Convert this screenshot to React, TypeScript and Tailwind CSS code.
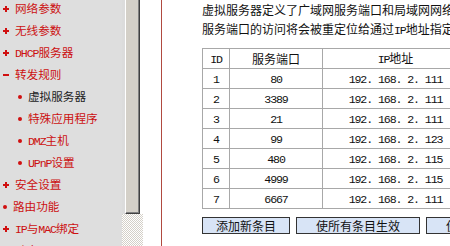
import type { ReactNode } from "react";

// half-width latin / digits in the bitmap-font look
function M({ children }: { children: ReactNode }) {
  return (
    <span className="font-['Liberation_Mono',monospace] text-[11.6px] tracking-[-1.1px]">
      {children}
    </span>
  );
}

type MenuItem = {
  label: ReactNode;
  sub?: boolean;
  mark?: "plus" | "minus" | "dot";
  active?: boolean;
};

const MENU: MenuItem[] = [
  { label: "网络参数", mark: "plus" },
  { label: "无线参数", mark: "plus" },
  { label: <><M>DHCP</M>服务器</>, mark: "plus" },
  { label: "转发规则", mark: "minus" },
  { label: "虚拟服务器", sub: true, active: true },
  { label: "特殊应用程序", sub: true },
  { label: <><M>DMZ</M>主机</>, sub: true },
  { label: <><M>UPnP</M>设置</>, sub: true },
  { label: "安全设置", mark: "plus" },
  { label: "路由功能", mark: "dot" },
  { label: <><M>IP</M>与<M>MAC</M>绑定</>, mark: "plus" },
  { label: <>动态<M>DNS</M></>, mark: "plus" },
];

const ROWS = [
  { id: "1", port: "80", ip: "192.168.2.111" },
  { id: "2", port: "3389", ip: "192.168.2.111" },
  { id: "3", port: "21", ip: "192.168.2.111" },
  { id: "4", port: "99", ip: "192.168.2.123" },
  { id: "5", port: "480", ip: "192.168.2.115" },
  { id: "6", port: "4999", ip: "192.168.2.115" },
  { id: "7", port: "6667", ip: "192.168.2.111" },
];

function Mark({ kind }: { kind?: MenuItem["mark"] }) {
  if (kind === "plus")
    return (
      <svg width="6" height="6" viewBox="0 0 6 6" className="shrink-0">
        <rect x="0" y="2" width="6" height="2" fill="#d01010" />
        <rect x="2" y="0" width="2" height="6" fill="#d01010" />
      </svg>
    );
  if (kind === "minus")
    return (
      <svg width="6" height="6" viewBox="0 0 6 6" className="shrink-0">
        <rect x="0" y="2" width="6" height="2" fill="#d01010" />
      </svg>
    );
  return <span className="size-[4px] shrink-0 rounded-full bg-[#d01010]" />;
}

const cell = "border border-[#a8a8a8] p-0 text-center font-normal";

export default function App() {
  return (
    <div className="flex h-[246px] w-[450px] overflow-hidden bg-white font-['Noto_Sans_CJK_SC',sans-serif] text-[11.6px]">
      {/* Menu frame */}
      <div className="w-[122px] shrink-0 bg-[#dedede]">
        <ul className="-mt-[2px]">
          {MENU.map((item, i) => (
            <li
              key={i}
              className={
                "flex h-[22px] items-center whitespace-nowrap " +
                (item.sub ? "gap-[6px] pl-[18px]" : "gap-[6px] pl-[3px]") +
                (item.active ? " text-[#222222]" : " text-[#cc1010]")
              }
            >
              <Mark kind={item.mark} />
              <span>{item.label}</span>
            </li>
          ))}
        </ul>
      </div>

      {/* Scrollbar */}
      <div className="flex w-[21px] shrink-0 flex-col">
        <div className="flex h-[214px]">
          <div className="w-[3px] bg-[#dcdcdc]" />
          <div className="w-[15px] border-r border-b border-l border-r-[#404040] border-b-[#404040] border-l-white bg-[#d4d0c8] shadow-[inset_-1px_-1px_0_#808080]" />
          <div className="w-[3px] bg-white" />
        </div>
        <div className="flex-1 bg-[repeating-conic-gradient(#ffffff_0%_25%,#d4d0c8_0%_50%)] bg-[length:2px_2px]" />
      </div>

      <div className="w-[18px] shrink-0 bg-white" />

      {/* Main frame */}
      <div className="min-w-0 flex-1 overflow-hidden border-l border-[#b04a40] pl-[40px] text-[#111111]">
        <div className="whitespace-nowrap text-[12px] leading-[19px]">
          <p>虚拟服务器定义了广域网服务端口和局域网网络服务器之间的映射关系，</p>
          <p>
            服务端口的访问将会被重定位给通过<M>IP</M>地址指定的局域网网络服务器。
          </p>
        </div>

        <table className="mt-[8px] w-[266px] min-w-[266px] table-fixed border-collapse border border-[#8c8c8c] text-[12px] leading-[16px]">
          <thead>
            <tr className="h-[20px]">
              <th className={cell + " w-[27px]"}>
                <M>ID</M>
              </th>
              <th className={cell + " w-[93px]"}>服务端口</th>
              <th className={cell + " w-[146px]"}>
                <M>IP</M>地址
              </th>
            </tr>
          </thead>
          <tbody>
            {ROWS.map((r) => (
              <tr key={r.id} className="h-[20px]">
                <td className={cell}>
                  <M>{r.id}</M>
                </td>
                <td className={cell}>
                  <M>{r.port}</M>
                </td>
                <td className={cell}>
                  <M>{r.ip.split(".").join(". ")}</M>
                </td>
              </tr>
            ))}
          </tbody>
        </table>

        <div className="mt-[8px] flex gap-[6px] whitespace-nowrap text-[12px]">
          <button className="h-[17px] w-[88px] shrink-0 border border-[#333333] bg-[#d8e4f6] leading-none">
            添加新条目
          </button>
          <button className="h-[17px] w-[124px] shrink-0 border border-[#333333] bg-[#d8e4f6] leading-none">
            使所有条目生效
          </button>
          <button className="h-[17px] w-[124px] shrink-0 border border-[#333333] bg-[#d8e4f6] leading-none">
            使所有条目失效
          </button>
        </div>
      </div>
    </div>
  );
}
